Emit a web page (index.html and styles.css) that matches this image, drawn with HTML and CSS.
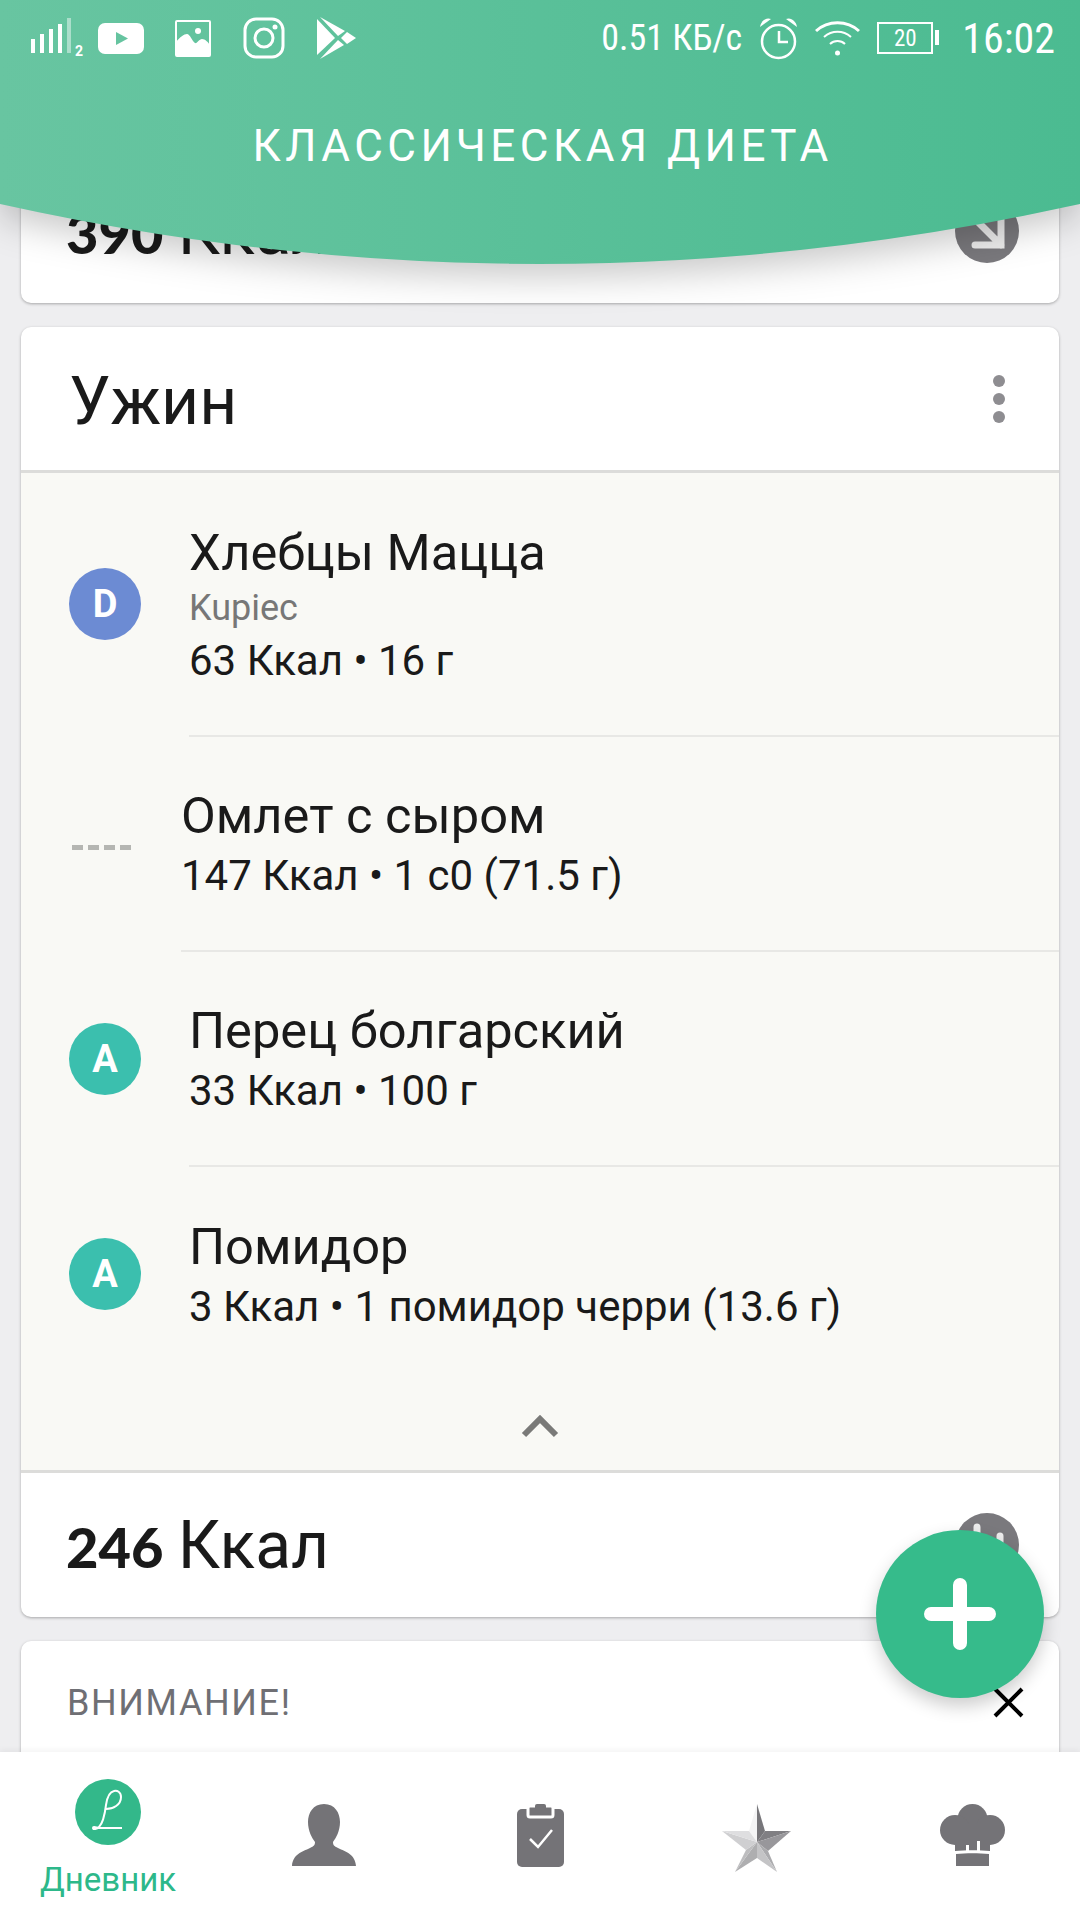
FILE: index.html
```html
<!DOCTYPE html>
<html lang="ru">
<head>
    <meta charset="UTF-8">
    <meta name="viewport" content="width=device-width, initial-scale=1.0">
    <title>Классическая диета</title>
    <link rel="stylesheet" href="styles.css">
</head>
<body>
    <header class="app-header">
        <svg class="header-bg" viewBox="0 0 1080 340" width="1080" height="340">
            <defs>
                <linearGradient id="headerGrad" x1="0" y1="0" x2="1" y2="0">
                    <stop offset="0" stop-color="#68C5A1"/>
                    <stop offset="1" stop-color="#4BBB91"/>
                </linearGradient>
            </defs>
            <path d="M0 0H1080V204Q540 324 0 204Z" fill="url(#headerGrad)"/>
        </svg>
        <div class="status-bar">
            <div class="status-left">
                <svg class="signal" width="54" height="40" viewBox="0 0 54 40">
                    <rect x="0" y="21" width="4" height="14" fill="#fff"/>
                    <rect x="9" y="16" width="4" height="19" fill="#fff"/>
                    <rect x="18" y="11" width="4" height="24" fill="#fff"/>
                    <rect x="27" y="6" width="4" height="29" fill="#fff"/>
                    <rect x="36" y="0" width="4" height="35" fill="#fff" opacity=".45"/>
                    <text x="44" y="38" class="signal-sim">2</text>
                </svg>
                <svg width="46" height="31" viewBox="0 0 46 31">
                    <rect width="46" height="31" rx="7" fill="#fff"/>
                    <path d="M18 9L30 15.5L18 22Z" fill="#66C4A0"/>
                </svg>
                <svg class="gallery" width="36" height="37" viewBox="0 0 36 37">
                    <rect x="1" y="1" width="34" height="35" rx="1" fill="none" stroke="#fff" stroke-width="2"/>
                    <circle cx="23" cy="11" r="3" fill="#fff"/>
                    <path d="M1 22C5 17 9 14 12 14C15 14 17 21 20 23C22 24 24 19 27 19C30 19 33 22 35 25V36H1Z" fill="#fff"/>
                </svg>
                <svg width="42" height="42" viewBox="0 0 42 42">
                    <rect x="2" y="2" width="38" height="38" rx="11" fill="none" stroke="#fff" stroke-width="3"/>
                    <circle cx="21" cy="21" r="9" fill="none" stroke="#fff" stroke-width="3"/>
                    <circle cx="32" cy="10" r="2.5" fill="#fff"/>
                </svg>
                <svg width="39" height="42" viewBox="0 0 39 42">
                    <path d="M0 2L18 21L0 38Z" fill="#fff"/>
                    <path d="M3 0L28 14L21 19Z" fill="#fff"/>
                    <path d="M30 15L39 21L30 27L24 21Z" fill="#fff"/>
                    <path d="M21 23L27 28L3 42Z" fill="#fff"/>
                </svg>
            </div>
            <div class="status-right">
                <span class="net-speed">0.51 КБ/с</span>
                <svg width="39" height="43" viewBox="0 0 39 43">
                    <circle cx="19.5" cy="24.5" r="16.5" fill="none" stroke="#fff" stroke-width="2.5"/>
                    <path d="M20 14V25H29" fill="none" stroke="#fff" stroke-width="2.5"/>
                    <path d="M1 10C2 4 7 0 12 2Z" fill="#fff"/>
                    <path d="M38 10C37 4 32 0 27 2Z" fill="#fff"/>
                </svg>
                <svg width="45" height="35" viewBox="0 0 45 35">
                    <path d="M1 10C13 -1 32 -1 44 10" fill="none" stroke="#fff" stroke-width="3"/>
                    <path d="M9 16C17 9 28 9 36 16" fill="none" stroke="#fff" stroke-width="2"/>
                    <path d="M15 23C19 19 26 19 30 23" fill="none" stroke="#fff" stroke-width="2"/>
                    <circle cx="22.5" cy="32" r="2.5" fill="#fff"/>
                </svg>
                <div class="battery"><span>20</span></div>
                <span class="clock">16:02</span>
            </div>
        </div>
        <h1 class="app-title">КЛАССИЧЕСКАЯ ДИЕТА</h1>
    </header>

    <main class="content">
        <section class="card">
            <div class="card-footer">
                <div class="kcal"><b>390</b> Ккал</div>
                <svg width="64" height="64" viewBox="0 0 64 64">
                    <circle cx="32" cy="32" r="32" fill="#7A797D"/>
                    <path d="M20 20L46 46M20 46H46V20" fill="none" stroke="#EDEDED" stroke-width="7" stroke-linecap="round"/>
                </svg>
            </div>
        </section>

        <section class="card">
            <div class="card-header">
                <h2 class="meal-title">Ужин</h2>
                <svg width="12" height="48" viewBox="0 0 12 48">
                    <circle cx="6" cy="6" r="6" fill="#8E8D91"/>
                    <circle cx="6" cy="24" r="6" fill="#8E8D91"/>
                    <circle cx="6" cy="42" r="6" fill="#8E8D91"/>
                </svg>
            </div>
            <div class="food-list">
                <div class="food-item food-item-tall">
                    <div class="grade grade-d">D</div>
                    <div class="food-text">
                        <div class="food-name">Хлебцы Мацца</div>
                        <div class="food-brand">Kupiec</div>
                        <div class="food-info">63 Ккал • 16 г</div>
                    </div>
                </div>
                <div class="food-item food-item-nograde">
                    <div class="grade-empty"></div>
                    <div class="food-text">
                        <div class="food-name">Омлет с сыром</div>
                        <div class="food-info">147 Ккал • 1 с0 (71.5 г)</div>
                    </div>
                </div>
                <div class="food-item">
                    <div class="grade grade-a">A</div>
                    <div class="food-text">
                        <div class="food-name">Перец болгарский</div>
                        <div class="food-info">33 Ккал • 100 г</div>
                    </div>
                </div>
                <div class="food-item">
                    <div class="grade grade-a">A</div>
                    <div class="food-text food-text-last">
                        <div class="food-name">Помидор</div>
                        <div class="food-info">3 Ккал • 1 помидор черри (13.6 г)</div>
                    </div>
                </div>
                <div class="collapse-row">
                    <svg width="38" height="24" viewBox="0 0 38 24">
                        <path d="M3 21L19 5L35 21" fill="none" stroke="#7A7A78" stroke-width="6"/>
                    </svg>
                </div>
            </div>
            <div class="card-footer">
                <div class="kcal"><b>246</b> Ккал</div>
                <svg width="64" height="64" viewBox="0 0 64 64">
                    <circle cx="32" cy="32" r="32" fill="#7A797D"/>
                    <path d="M22 14V40M45 23V50" fill="none" stroke="#EDEDED" stroke-width="7" stroke-linecap="round"/>
                </svg>
            </div>
        </section>

        <section class="card">
            <div class="notice-header">
                <span class="notice-title">ВНИМАНИЕ!</span>
                <svg width="31" height="31" viewBox="0 0 31 31">
                    <path d="M2 2L29 29M29 2L2 29" stroke="#000" stroke-width="4"/>
                </svg>
            </div>
        </section>
    </main>

    <button class="fab" type="button">
        <svg width="72" height="72" viewBox="0 0 72 72">
            <path d="M36 7V65M7 36H65" stroke="#fff" stroke-width="14" stroke-linecap="round"/>
        </svg>
    </button>

    <nav class="bottom-nav">
        <div class="nav-item nav-item-active">
            <svg width="66" height="66" viewBox="0 0 66 66">
                <circle cx="33" cy="33" r="33" fill="#33B88A"/>
                <path d="M31 30C38 30 46 26 46 18C46 13 42 11 39 12C34 13 32 19 31 26C30 34 28 44 24 48C22 50 18 51 18 49C18 47 22 49 26 49H47" fill="none" stroke="#fff" stroke-width="2"/>
            </svg>
            <span class="nav-label">Дневник</span>
        </div>
        <div class="nav-item">
            <svg width="64" height="62" viewBox="0 0 64 62">
                <path d="M32 0C43 0 48 9 48 18C48 27 44 34 41 38C41 41 42 42 46 44C54 48 63 50 64 62H0C1 50 10 48 18 44C22 42 23 41 23 38C20 34 16 27 16 18C16 9 21 0 32 0Z" fill="#747377"/>
            </svg>
        </div>
        <div class="nav-item">
            <svg width="47" height="63" viewBox="0 0 47 63">
                <rect x="0" y="5" width="47" height="58" rx="5" fill="#747377"/>
                <rect x="11" y="2" width="25" height="11" rx="2" fill="#747377" stroke="#fff" stroke-width="3"/>
                <rect x="18" y="0" width="11" height="6" rx="2" fill="#747377"/>
                <path d="M13 35L21 43L35 26" fill="none" stroke="#fff" stroke-width="2.5"/>
            </svg>
        </div>
        <div class="nav-item">
            <svg width="69" height="68" viewBox="0 0 69 68">
                <path d="M35 0L27 27L35 38Z" fill="#F4F4F5"/>
                <path d="M35 0L43 27L35 38Z" fill="#77767A"/>
                <path d="M43 27L69 27L35 38Z" fill="#807F83"/>
                <path d="M69 27L46 47L35 38Z" fill="#98979B"/>
                <path d="M46 47L55 68L35 38Z" fill="#ABABAE"/>
                <path d="M35 38L55 68L35 54Z" fill="#C4C4C6"/>
                <path d="M35 38L35 54L13 68Z" fill="#AEAEB0"/>
                <path d="M35 38L13 68L24 46Z" fill="#BDBDBF"/>
                <path d="M0 27L24 46L35 38Z" fill="#CFCFD1"/>
                <path d="M0 27L27 27L35 38Z" fill="#DEDEE0"/>
            </svg>
        </div>
        <div class="nav-item">
            <svg width="65" height="62" viewBox="0 0 65 62">
                <circle cx="32.5" cy="15" r="15" fill="#747377"/>
                <circle cx="15" cy="26" r="15" fill="#747377"/>
                <circle cx="50" cy="26" r="15" fill="#747377"/>
                <path d="M15 20H50V47C40 46 25 46 15 47Z" fill="#747377"/>
                <path d="M26 41H29V47H26ZM37 37H40V47H37Z" fill="#fff"/>
                <path d="M16 50C26 49 39 49 49 50V62H16Z" fill="#747377"/>
            </svg>
        </div>
    </nav>
</body>
</html>
```

FILE: styles.css
```css
html, body {
    margin: 0;
    padding: 0;
}
body {
    width: 1080px;
    height: 1920px;
    overflow: hidden;
    position: relative;
    display: flex;
    flex-direction: column;
    font-family: Roboto, "Noto Sans", sans-serif;
    background-color: #eeeef0;
    color: #1a1a1a;
}

/* header lies over the scrolled cards */
.app-header {
    position: absolute;
    top: 0;
    left: 0;
    width: 1080px;
    z-index: 2;
    color: #fff;
}
.header-bg {
    position: absolute;
    top: 0;
    left: 0;
    filter: drop-shadow(0 12px 18px rgba(0, 0, 0, 0.22));
}
.status-bar {
    position: relative;
    height: 76px;
    padding: 0 25px 0 31px;
    display: flex;
    justify-content: space-between;
    align-items: center;
}
.status-left,
.status-right {
    display: flex;
    align-items: center;
}
.status-left {
    gap: 32px;
}
.status-right {
    gap: 17px;
}
.signal {
    margin-right: -19px;
}
.gallery {
    margin-left: -1px;
}
.signal-sim {
    font-family: Roboto, sans-serif;
    font-size: 14px;
    font-weight: 700;
    fill: #fff;
}
.net-speed {
    font-size: 36px;
    font-stretch: 75%;
    white-space: nowrap;
}
.clock {
    margin-left: 7px;
    font-size: 42px;
    font-stretch: 75%;
}
.battery {
    position: relative;
    width: 56px;
    height: 32px;
    margin-right: 5px;
    box-sizing: border-box;
    border: 2.5px solid #fff;
    display: flex;
    justify-content: center;
    align-items: center;
    font-size: 23px;
    font-stretch: 75%;
}
.battery::after {
    content: "";
    position: absolute;
    right: -8px;
    top: 6px;
    width: 4px;
    height: 15px;
    background-color: #fff;
}
.app-title {
    position: relative;
    margin: 41px 0 0;
    padding-left: 5px;
    text-align: center;
    font-size: 44px;
    font-weight: 400;
    letter-spacing: 4.5px;
    line-height: 58px;
}

.content {
    flex: 1;
    min-height: 0;
    overflow: hidden;
    padding: 159px 21px 0;
    display: flex;
    flex-direction: column;
    gap: 24px;
}
.card {
    flex: none;
    background-color: #fff;
    border-radius: 10px;
    box-shadow: 0 1px 3px rgba(0, 0, 0, 0.3);
    overflow: hidden;
}
.card-header {
    height: 143px;
    padding: 0 54px 0 48px;
    display: flex;
    justify-content: space-between;
    align-items: center;
    border-bottom: 3px solid #dcdcda;
}
.meal-title {
    margin: 6px 0 0;
    font-size: 66px;
    font-weight: 400;
}
.card-footer {
    height: 144px;
    padding: 0 40px 0 45px;
    display: flex;
    justify-content: space-between;
    align-items: center;
}
.kcal {
    font-size: 66px;
}
.kcal b {
    margin-right: -2px;
    font-family: Lato, Roboto, sans-serif;
    font-size: 56px;
    font-weight: 900;
}

.food-list {
    background-color: #f9f9f5;
    border-bottom: 3px solid #dcdcda;
}
.food-item {
    height: 215px;
    padding-left: 48px;
    display: flex;
    align-items: center;
    gap: 48px;
}
.food-item-tall {
    height: 264px;
}
.food-item-nograde {
    padding-left: 51px;
    gap: 49px;
}
.grade {
    flex: none;
    width: 72px;
    height: 72px;
    margin-bottom: 2px;
    border-radius: 50%;
    color: #fff;
    font-size: 38px;
    font-weight: 700;
    display: flex;
    justify-content: center;
    align-items: center;
}
.grade-d {
    background-color: #6c8bd3;
}
.grade-a {
    background-color: #3bbfae;
}
.grade-empty {
    flex: none;
    width: 60px;
    height: 5px;
    margin-top: 6px;
    background-image: repeating-linear-gradient(90deg, #b5b6b2 0 11px, transparent 11px 16px);
}
.food-text {
    flex: 1;
    align-self: stretch;
    padding-top: 3px;
    display: flex;
    flex-direction: column;
    justify-content: center;
    border-bottom: 2px solid #e8e8e5;
}
.food-text-last {
    border-bottom: none;
}
.food-name {
    font-size: 50.6px;
    line-height: 62px;
}
.food-brand {
    font-size: 36px;
    line-height: 48px;
    color: #777;
}
.food-info {
    font-size: 42px;
    line-height: 58px;
}
.collapse-row {
    height: 88px;
    display: flex;
    justify-content: center;
    align-items: center;
}

.notice-header {
    height: 122px;
    padding: 0 35px 0 46px;
    display: flex;
    justify-content: space-between;
    align-items: center;
}
.notice-title {
    margin-top: 2px;
    font-size: 36px;
    letter-spacing: 1.6px;
    color: #6f6f74;
}

.fab {
    position: absolute;
    left: 876px;
    top: 1530px;
    z-index: 1;
    width: 168px;
    height: 168px;
    padding: 0;
    border: none;
    border-radius: 50%;
    background-color: #36bb8b;
    box-shadow: 0 8px 18px rgba(0, 0, 0, 0.2);
    display: flex;
    justify-content: center;
    align-items: center;
}

.bottom-nav {
    position: relative;
    z-index: 1;
    flex: none;
    height: 168px;
    background-color: #fff;
    box-shadow: 0 -2px 6px rgba(0, 0, 0, 0.05);
    display: grid;
    grid-template-columns: repeat(5, 216px);
}
.nav-item {
    padding-top: 52px;
    display: flex;
    flex-direction: column;
    align-items: center;
}
.nav-item-active {
    padding-top: 27px;
}
.nav-label {
    margin-top: 16px;
    font-size: 33px;
    line-height: 38px;
    color: #2db88a;
}
```
